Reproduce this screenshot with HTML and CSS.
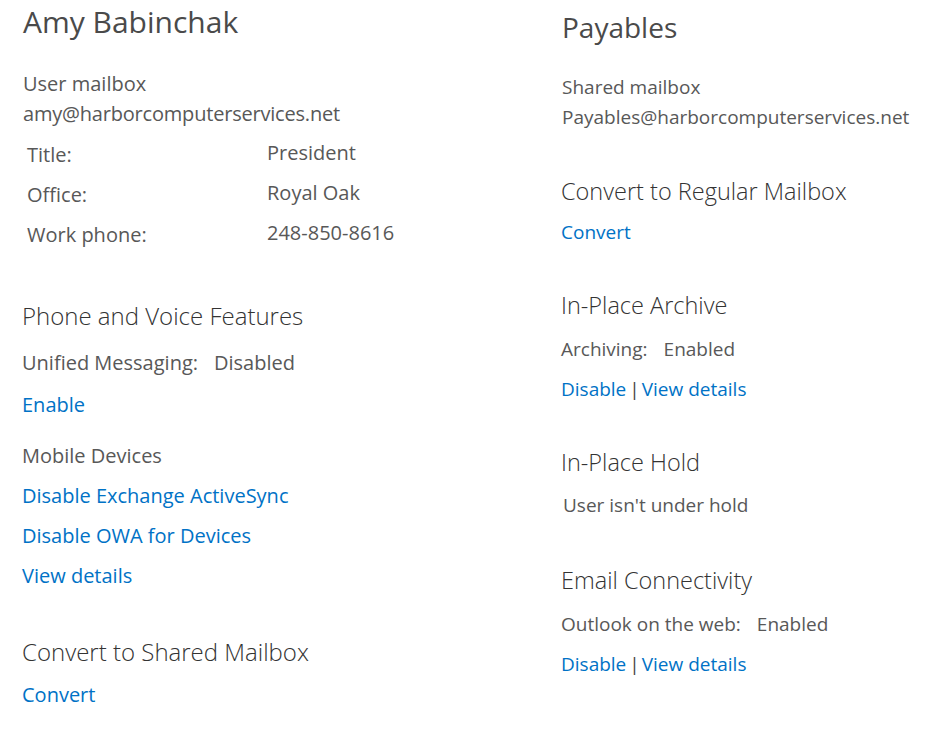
FILE: index.html
```html
<!DOCTYPE html>
<html lang="en">
<head>
  <meta charset="UTF-8">
  <meta name="viewport" content="width=device-width, initial-scale=1.0">
  <title>Mailbox Details</title>
  <link rel="stylesheet" href="styles.css">
</head>
<body>

  <div class="details">

    <!-- Left column: user mailbox -->
    <div class="column left">
      <h1 class="name">Amy Babinchak</h1>
      <div class="line first">User mailbox</div>
      <div class="line email">amy@harborcomputerservices.net</div>

      <div class="props">
        <div class="label">Title:</div>
        <div class="value">President</div>
        <div class="label">Office:</div>
        <div class="value">Royal Oak</div>
        <div class="label">Work phone:</div>
        <div class="value">248-850-8616</div>
      </div>

      <div class="section phone">
        <h2>Phone and Voice Features</h2>
        <div class="row first">Unified Messaging:<span class="state">Disabled</span></div>
        <div class="row enable"><a href="#">Enable</a></div>
        <div class="row gap">Mobile Devices</div>
        <div class="row"><a href="#">Disable Exchange ActiveSync</a></div>
        <div class="row"><a href="#">Disable OWA for Devices</a></div>
        <div class="row"><a href="#">View details</a></div>
      </div>

      <div class="section shared">
        <h2>Convert to Shared Mailbox</h2>
        <div class="row near"><a href="#">Convert</a></div>
      </div>
    </div>

    <!-- Right column: shared mailbox -->
    <div class="column right">
      <h1 class="name">Payables</h1>
      <div class="line first">Shared mailbox</div>
      <div class="line">Payables@harborcomputerservices.net</div>

      <div class="section regular">
        <h2>Convert to Regular Mailbox</h2>
        <div class="row near"><a href="#">Convert</a></div>
      </div>

      <div class="section archive">
        <h2>In-Place Archive</h2>
        <div class="row first">Archiving:<span class="state">Enabled</span></div>
        <div class="row"><a href="#">Disable</a><span class="pipe">|</span><a href="#">View details</a></div>
      </div>

      <div class="section hold">
        <h2>In-Place Hold</h2>
        <div class="row near indent">User isn't under hold</div>
      </div>

      <div class="section connectivity">
        <h2>Email Connectivity</h2>
        <div class="row first">Outlook on the web:<span class="state">Enabled</span></div>
        <div class="row"><a href="#">Disable</a><span class="pipe">|</span><a href="#">View details</a></div>
      </div>
    </div>

  </div>

</body>
</html>
```

FILE: styles.css
```css
* {
  margin: 0;
  padding: 0;
  box-sizing: border-box;
}

body {
  background-color: #fff;
  color: #585858;
  font-family: "Open Sans", "Noto Sans", Arial, sans-serif;
  font-size: 20px;
}

a {
  color: #0072c6;
  text-decoration: none;
}

/* Two column layout */
.details {
  display: grid;
  grid-template-columns: 539px 1fr;
  padding-left: 22px;
}

.left {
  padding-top: 2px;
}

.right {
  padding-top: 7px;
  font-size: 19px;
}

.name {
  font-size: 30px;
  font-weight: 400;
  line-height: 40px;
  color: #4a4a4a;
  padding-left: 1px;
}

.right .name {
  font-size: 28px;
}

.line {
  line-height: 30px;
  padding-left: 1px;
}

.line.email {
  letter-spacing: -0.2px;
}

.left .line.first {
  margin-top: 27px;
}

.right .line.first {
  margin-top: 25px;
}

/* Title / Office / Work phone */
.props {
  display: grid;
  grid-template-columns: 240px 1fr;
  align-items: start;
  margin-top: 6px;
  padding-left: 5px;
}

.props .label {
  line-height: 40px;
}

.props .value {
  line-height: 36px;
}

/* Sections */
.section h2 {
  font-size: 24px;
  font-weight: 300;
  line-height: 36px;
  color: #333;
}

.right .section h2 {
  font-size: 23.5px;
}

.row {
  line-height: 40px;
}

.row.first {
  margin-top: 9px;
}

.row.enable {
  margin-top: 2px;
}

.row.near {
  margin-top: 5px;
}

.row.gap {
  margin-top: 11px;
}

.right .row.near {
  margin-top: 3px;
}

.right .row.indent {
  padding-left: 2px;
  margin-top: 5px;
}

.state {
  margin-left: 16px;
}

.pipe {
  color: #444;
  margin: 0 2px 0 3px;
}

.phone {
  margin-top: 43px;
}

.shared {
  margin-top: 38px;
}

.regular {
  margin-top: 41px;
}

.archive {
  margin-top: 35px;
}

.archive .row.first {
  margin-top: 6px;
}

.hold {
  margin-top: 35px;
}

.connectivity {
  margin-top: 37px;
}

.connectivity .row.first {
  margin-top: 6px;
}
```
